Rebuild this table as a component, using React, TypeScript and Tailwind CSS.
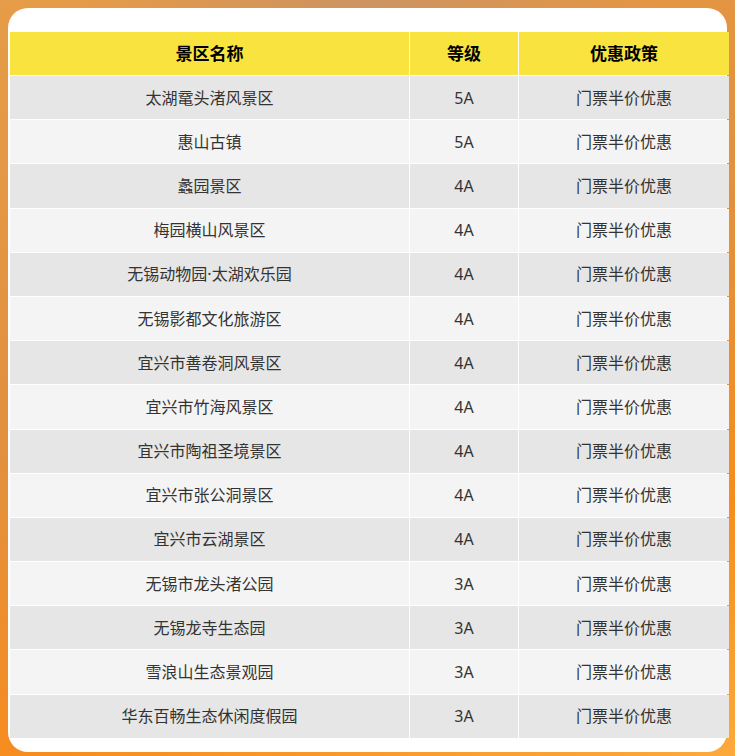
import React from "react";

const rows: [string, string][] = [
  ["太湖鼋头渚风景区", "5A"],
  ["惠山古镇", "5A"],
  ["蠡园景区", "4A"],
  ["梅园横山风景区", "4A"],
  ["无锡动物园·太湖欢乐园", "4A"],
  ["无锡影都文化旅游区", "4A"],
  ["宜兴市善卷洞风景区", "4A"],
  ["宜兴市竹海风景区", "4A"],
  ["宜兴市陶祖圣境景区", "4A"],
  ["宜兴市张公洞景区", "4A"],
  ["宜兴市云湖景区", "4A"],
  ["无锡市龙头渚公园", "3A"],
  ["无锡龙寺生态园", "3A"],
  ["雪浪山生态景观园", "3A"],
  ["华东百畅生态休闲度假园", "3A"],
];

export default function App() {
  return (
    <div
      className="w-[735px] h-[756px] p-[8px] pb-[4px] bg-[radial-gradient(ellipse_at_50%_0%,#cc9462_0%,rgba(204,148,98,0)_55%),linear-gradient(160deg,#e69c48_0%,#e2903e_45%,#f78c1e_75%,#fca93b_100%)]"
      style={{ fontFamily: '"Noto Sans", "Noto Sans CJK SC", sans-serif' }}
    >
      <div className="w-full h-full bg-white rounded-[20px] pt-[24px] pl-[2px] pr-[1px]">
        <div className="flex flex-col gap-px">
          <div className="grid grid-cols-[399px_108px_210px] gap-px h-[43px]">
            {["景区名称", "等级", "优惠政策"].map((h) => (
              <div
                key={h}
                className="bg-[#f9e43f] flex items-center justify-center text-[17px] font-bold text-black"
              >
                {h}
              </div>
            ))}
          </div>
          {rows.map(([name, level], i) => (
            <div
              key={name}
              className="grid grid-cols-[399px_108px_210px] gap-px h-[43.2px]"
            >
              {[name, level, "门票半价优惠"].map((t, j) => (
                <div
                  key={j}
                  className={`${i % 2 === 0 ? "bg-[#e6e6e6]" : "bg-[#f4f4f4]"} flex items-center justify-center text-[16px] text-[#333333]`}
                >
                  {t}
                </div>
              ))}
            </div>
          ))}
        </div>
      </div>
    </div>
  );
}
